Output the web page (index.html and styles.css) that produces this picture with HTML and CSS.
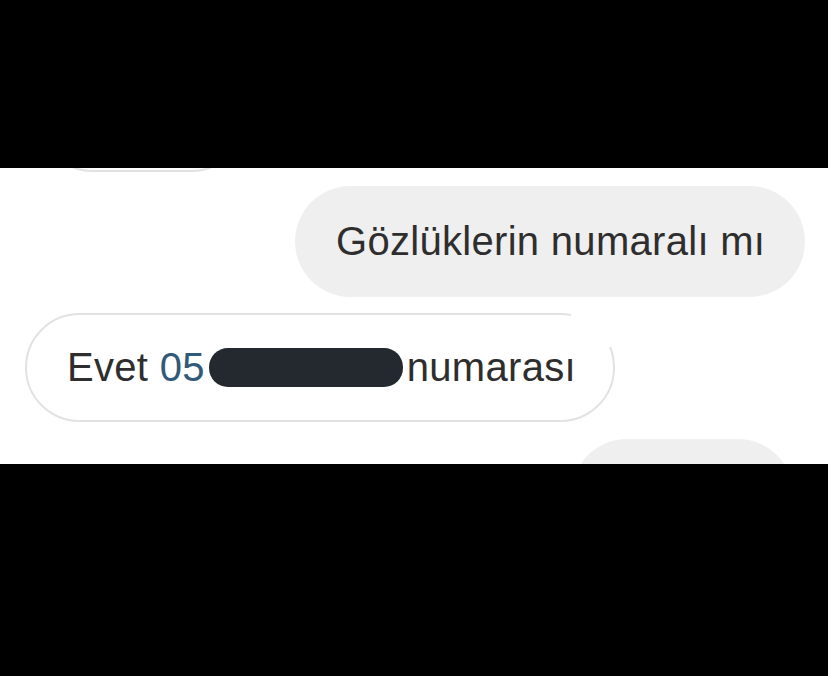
FILE: index.html
```html
<!DOCTYPE html>
<html>
<head>
	<meta charset="utf-8">
	<meta name="viewport" content="width=device-width, initial-scale=1">
	<title>chat</title>
	<link rel="stylesheet" href="styles.css">
</head>
<body>

<main class="shot">
	<div class="bar top"></div>
	<div class="chat">
		<div class="bubble in ghost"></div>
		<div class="bubble out first">Gözlüklerin numaralı mı</div>
		<div class="bubble in reply"><span>Evet <span class="num">05</span><span class="blot"></span>numarası</span><div class="smudge"></div></div>
		<div class="bubble out last"></div>
	</div>
	<div class="bar bottom"></div>
</main>

</body>
</html>
```

FILE: styles.css
```css
html, body {
	margin: 0;
	padding: 0;
	background: #000;
}

.shot {
	width: 828px;
	height: 676px;
	display: flex;
	flex-direction: column;
	font-family: "Liberation Sans", Arial, sans-serif;
}

.bar.top {
	height: 168px;
	background: #000;
}

.bar.bottom {
	flex: 1;
	background: #000;
}

.chat {
	height: 296px;
	background: #fff;
	overflow: hidden;
	display: flex;
	flex-direction: column;
	align-items: flex-start;
}

.bubble {
	box-sizing: border-box;
	border-radius: 56px;
	display: flex;
	align-items: center;
	font-size: 40px;
	letter-spacing: .3px;
	color: #2e2e2e;
	white-space: nowrap;
	flex-shrink: 0;
}

.bubble.in {
	background: #fff;
	border: 2px solid #e2e2e2;
}

.bubble.out {
	background: #efefef;
	align-self: flex-end;
}

.ghost {
	width: 200px;
	height: 100px;
	margin: -96px 0 0 42px;
	border-color: #e8e8e8;
}

.first {
	height: 111px;
	margin: 14px 23px 0 0;
	padding: 0 0 0 41px;
	width: 510px;
}

.reply {
	position: relative;
	width: 590px;
	height: 109px;
	margin: 16px 0 0 25px;
	padding-left: 40px;
}

.num {
	color: #30597a;
}

.blot {
	display: inline-block;
	width: 194px;
	height: 39px;
	margin: 0 4px 0 4px;
	border-radius: 19px;
	background: #23292f;
	vertical-align: -6px;
}

.smudge {
	position: absolute;
	left: 544px;
	top: -4px;
	width: 190px;
	height: 36px;
	background: #fff;
	border-radius: 0 0 20px 30px;
}

.last {
	width: 221px;
	height: 110px;
	margin: 17px 35px 0 0;
}
```
